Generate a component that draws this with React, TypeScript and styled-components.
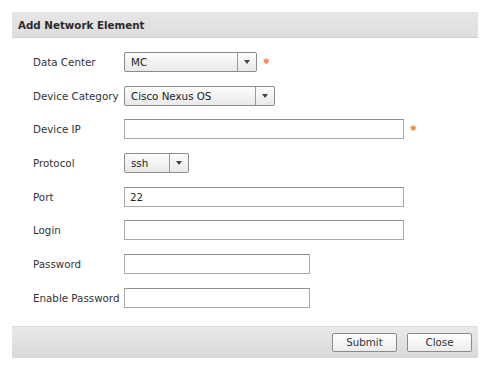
import React from 'react';
import styled, { createGlobalStyle } from 'styled-components';

const GlobalStyle = createGlobalStyle`
  html, body {
    margin: 0;
    padding: 0;
    background: #ffffff;
  }
  body {
    font-family: "DejaVu Sans", Verdana, sans-serif;
    font-size: 10.3px;
    color: #333333;
  }
`;

const Dialog = styled.div`
  margin: 12px 13px 0 12px;
  width: 466px;
  display: flex;
  flex-direction: column;
`;

const Header = styled.div`
  height: 25px;
  display: flex;
  align-items: center;
  padding-left: 6px;
  background: linear-gradient(#e6e6e6, #dedede);
  border-bottom: 1px solid #cfcfcf;
  font-weight: bold;
  color: #2b2b2b;
`;

const Body = styled.div`
  display: grid;
  grid-template-columns: 91px 1fr;
  row-gap: 13.7px;
  align-items: center;
  padding: 14px 0 18px 21px;
`;

const Label = styled.label`
  color: #333333;
  white-space: nowrap;
`;

const Field = styled.div`
  display: flex;
  align-items: center;
  height: 20px;
`;

const TextBox = styled.div<{ $width: number }>`
  box-sizing: border-box;
  width: ${(p) => p.$width}px;
  height: 20px;
  border: 1px solid #a9a9a9;
  border-top-color: #8f8f8f;
  background: #ffffff;
  padding: 0 5px;
  display: flex;
  align-items: center;
  color: #222222;
`;

const SelectBox = styled.div<{ $width: number }>`
  box-sizing: border-box;
  width: ${(p) => p.$width}px;
  height: 20px;
  border: 1px solid #8c8c8c;
  border-radius: 2px;
  background: linear-gradient(#fdfdfd, #e9e9e9);
  display: flex;
  color: #222222;
`;

const SelectText = styled.span`
  flex: 1;
  display: flex;
  align-items: center;
  padding-left: 6px;
`;

const Arrow = styled.span`
  width: 18px;
  border-left: 1px solid #9a9a9a;
  display: flex;
  align-items: center;
  justify-content: center;
  &::after {
    content: '';
    border-left: 3.5px solid transparent;
    border-right: 3.5px solid transparent;
    border-top: 4px solid #444444;
  }
`;

const Required = styled.span`
  color: #f08a3a;
  font-size: 8px;
  margin-left: 6px;
  line-height: 1;
`;

const Footer = styled.div`
  height: 31px;
  display: flex;
  align-items: center;
  justify-content: flex-end;
  gap: 10px;
  padding-right: 6px;
  background: linear-gradient(#e9e9e9, #d9d9d9);
  border-top: 1px solid #dddddd;
`;

const Button = styled.button`
  box-sizing: border-box;
  width: 65px;
  height: 19px;
  border: 1px solid #8a8a8a;
  border-radius: 2px;
  background: linear-gradient(#ffffff, #ececec);
  font-family: "DejaVu Sans", Verdana, sans-serif;
  font-size: 10.3px;
  color: #333333;
  padding: 0;
`;

type Row =
  | { label: string; kind: 'text'; width: number; value?: string; required?: boolean }
  | { label: string; kind: 'select'; width: number; value: string; required?: boolean };

const rows: Row[] = [
  { label: 'Data Center', kind: 'select', width: 133, value: 'MC', required: true },
  { label: 'Device Category', kind: 'select', width: 151, value: 'Cisco Nexus OS' },
  { label: 'Device IP', kind: 'text', width: 280, required: true },
  { label: 'Protocol', kind: 'select', width: 65, value: 'ssh' },
  { label: 'Port', kind: 'text', width: 280, value: '22' },
  { label: 'Login', kind: 'text', width: 280 },
  { label: 'Password', kind: 'text', width: 186 },
  { label: 'Enable Password', kind: 'text', width: 186 },
];

export default function App() {
  return (
    <>
      <GlobalStyle />
      <Dialog>
        <Header>Add Network Element</Header>
        <Body>
          {rows.map((row) => (
            <React.Fragment key={row.label}>
              <Label>{row.label}</Label>
              <Field>
                {row.kind === 'select' ? (
                  <SelectBox $width={row.width}>
                    <SelectText>{row.value}</SelectText>
                    <Arrow />
                  </SelectBox>
                ) : (
                  <TextBox $width={row.width}>{row.value}</TextBox>
                )}
                {row.required && <Required>✱</Required>}
              </Field>
            </React.Fragment>
          ))}
        </Body>
        <Footer>
          <Button>Submit</Button>
          <Button>Close</Button>
        </Footer>
      </Dialog>
    </>
  );
}
